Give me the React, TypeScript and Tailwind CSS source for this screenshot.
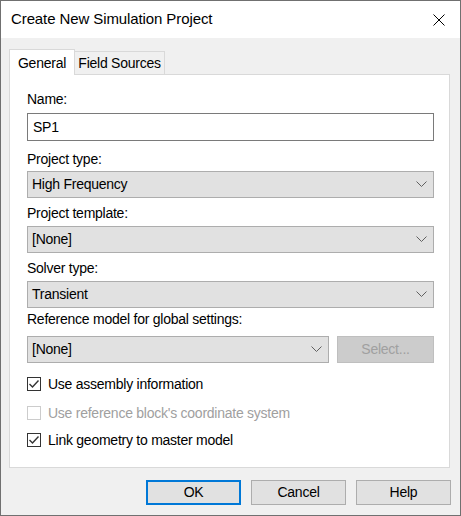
import React, { useState } from 'react'

const font = { fontFamily: '"Liberation Sans", Arial, sans-serif' }

function Chevron() {
  return (
    <svg width="11" height="7" viewBox="0 0 11 7" className="shrink-0">
      <path d="M0.5 0.5 L5.5 5.5 L10.5 0.5" fill="none" stroke="#606060" strokeWidth="1" />
    </svg>
  )
}

function Dropdown({ value, className = '' }: { value: string; className?: string }) {
  return (
    <div
      className={`flex h-[27px] items-center justify-between border border-[#adadad] bg-[#e1e1e1] pl-[4px] pr-[6px] text-black ${className}`}
    >
      <span>{value}</span>
      <Chevron />
    </div>
  )
}

function Check({
  label,
  checked,
  disabled,
  onChange,
  className = '',
}: {
  label: string
  checked: boolean
  disabled?: boolean
  onChange?: () => void
  className?: string
}) {
  return (
    <div className={`flex h-[16px] items-center gap-[7px] ${className}`} onClick={disabled ? undefined : onChange}>
      <div
        className={`flex h-[14px] w-[14px] items-center justify-center border bg-white ${
          disabled ? 'border-[#cccccc]' : 'border-[#333333]'
        }`}
      >
        {checked && (
          <svg width="12" height="12" viewBox="0 0 12 12">
            <path d="M1.5 6 L4.5 9 L10.5 2.5" fill="none" stroke="#333333" strokeWidth="1.4" />
          </svg>
        )}
      </div>
      <span className={disabled ? 'text-[#a0a0a0]' : 'text-black'}>{label}</span>
    </div>
  )
}

export default function App() {
  const [useAssembly, setUseAssembly] = useState(true)
  const [linkGeometry, setLinkGeometry] = useState(true)

  return (
    <div
      style={font}
      className="flex h-[516px] w-[461px] flex-col border border-[#707070] bg-[#f0f0f0] text-[14px] tracking-[-0.25px]"
    >
      {/* title bar */}
      <div className="flex h-[37px] shrink-0 items-center justify-between bg-white pl-[10px] pr-[15px]">
        <span className="text-[15px] tracking-[-0.1px] text-black">Create New Simulation Project</span>
        <svg width="12" height="12" viewBox="0 0 12 12">
          <path d="M0.5 0.5 L11.5 11.5 M11.5 0.5 L0.5 11.5" stroke="#000" strokeWidth="1" />
        </svg>
      </div>

      <div className="flex flex-1 flex-col px-[8px] pt-[10px]">
        {/* tabs */}
        <div className="flex h-[26px] items-end">
          <div className="relative z-10 -mb-px flex h-[26px] w-[66px] items-start justify-center border border-b-0 border-[#d9d9d9] bg-white pt-[3px] text-black">
            General
          </div>
          <div className="flex h-[23px] w-[90px] items-center justify-center border border-b-0 border-l-0 border-[#d9d9d9] bg-[#f0f0f0] text-black">
            Field Sources
          </div>
        </div>

        {/* panel */}
        <div className="flex h-[394px] w-[441px] flex-col border border-[#d9d9d9] bg-white pl-[17px] pr-[15px] pt-[16px] text-black">
          <div className="h-[16px] leading-[16px]">Name:</div>
          <div className="mt-[6px] flex h-[28px] items-center border border-[#7a7a7a] bg-white pl-[5px]">SP1</div>

          <div className="mt-[10px] h-[16px] leading-[16px]">Project type:</div>
          <Dropdown value="High Frequency" className="mt-[4px]" />

          <div className="mt-[7px] h-[16px] leading-[16px]">Project template:</div>
          <Dropdown value="[None]" className="mt-[5px]" />

          <div className="mt-[7px] h-[16px] leading-[16px]">Solver type:</div>
          <Dropdown value="Transient" className="mt-[5px]" />

          <div className="mt-[3px] h-[16px] leading-[16px]">Reference model for global settings:</div>
          <div className="mt-[9px] flex items-center gap-[8px]">
            <Dropdown value="[None]" className="w-[302px]" />
            <div className="flex h-[27px] flex-1 items-center justify-center border border-[#bfbfbf] bg-[#cccccc] text-[#a0a0a0]">
              Select...
            </div>
          </div>

          <Check
            className="mt-[13px]"
            label="Use assembly information"
            checked={useAssembly}
            onChange={() => setUseAssembly(!useAssembly)}
          />
          <Check className="mt-[13px]" label="Use reference block's coordinate system" checked={false} disabled />
          <Check
            className="mt-[11px]"
            label="Link geometry to master model"
            checked={linkGeometry}
            onChange={() => setLinkGeometry(!linkGeometry)}
          />
        </div>

        {/* buttons */}
        <div className="mt-[12px] flex justify-end gap-[10px] pr-[1px] text-black">
          <button className="h-[25px] w-[95px] border-2 border-[#0078d7] bg-[#e1e1e1]">OK</button>
          <button className="h-[25px] w-[95px] border border-[#adadad] bg-[#e1e1e1]">Cancel</button>
          <button className="h-[25px] w-[95px] border border-[#adadad] bg-[#e1e1e1]">Help</button>
        </div>
      </div>
    </div>
  )
}
